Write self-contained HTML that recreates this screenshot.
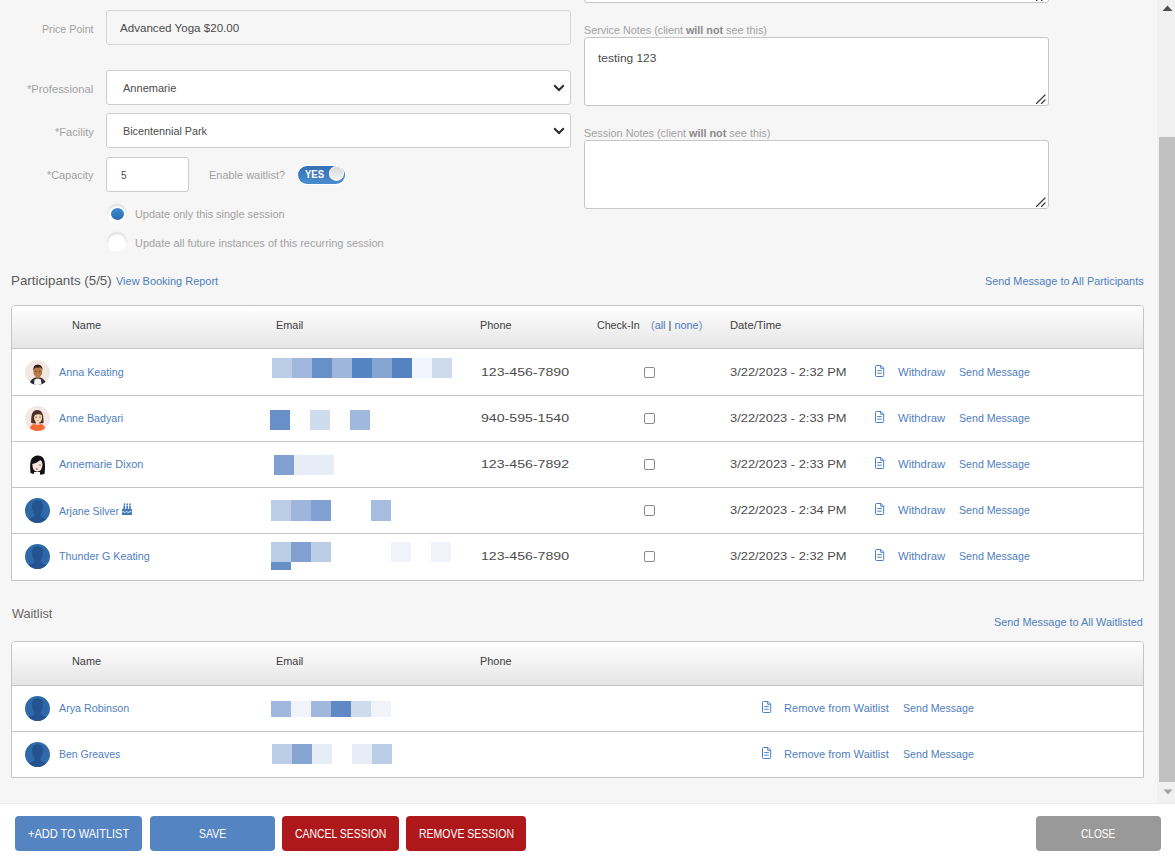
<!DOCTYPE html>
<html><head><meta charset="utf-8"><style>
html,body{margin:0;padding:0;}
body{width:1175px;height:861px;overflow:hidden;background:#f6f6f6;position:relative;font-family:"Liberation Sans",sans-serif;}
.a{position:absolute;box-sizing:border-box;}
.t{position:absolute;white-space:nowrap;line-height:1;transform-origin:0 0;font-family:"Liberation Sans",sans-serif;}
.inp{position:absolute;box-sizing:border-box;background:#fff;border:1px solid #cdcdcd;border-radius:3px;}
.ta{position:absolute;box-sizing:border-box;background:#fff;border:1px solid #c6c6c6;border-radius:3px;}
.grip{position:absolute;right:2px;bottom:1px;width:10px;height:10px;}
.tbl{position:absolute;box-sizing:border-box;background:#fff;border:1px solid #c4c4c4;border-radius:4px 4px 0 0;overflow:hidden;}
.th{position:absolute;left:0;right:0;top:0;background:linear-gradient(#ffffff,#e5e5e5);border-bottom:1px solid #c4c4c4;}
.rl{position:absolute;left:0;right:0;height:1px;background:#c4c4c4;}
.av{position:absolute;width:25px;height:25px;}
.em{position:absolute;}
.ic{position:absolute;width:10px;height:13px;}
.cb{position:absolute;width:11px;height:11px;box-sizing:border-box;border:1px solid #8a8a8a;border-radius:2px;background:#fff;}
.btn{position:absolute;top:816px;height:35px;border-radius:4px;}

</style></head><body>
<div class="ta" style="left:584px;top:-40px;width:465px;height:43px"><svg class="grip" viewBox="0 0 10 10"><path d="M0.5 9.5 L9 1 M5.5 9.5 L9 6" stroke="#3a3a3a" stroke-width="1.2" stroke-linecap="round" fill="none"/></svg></div>
<div class="inp" style="left:106px;top:10px;width:465px;height:35px;background:#f6f6f6;border-color:#d6d6d6"></div>
<div class="inp" style="left:106px;top:70px;width:465px;height:35px"><svg style="position:absolute;left:445.5px;top:12.7px" width="12" height="8" viewBox="0 0 12 8"><path d="M1.2 1.3 L6 6 L10.8 1.3" stroke="#2b2b2b" stroke-width="2" fill="none"/></svg></div>
<div class="inp" style="left:106px;top:113px;width:465px;height:35px"><svg style="position:absolute;left:445.5px;top:12.7px" width="12" height="8" viewBox="0 0 12 8"><path d="M1.2 1.3 L6 6 L10.8 1.3" stroke="#2b2b2b" stroke-width="2" fill="none"/></svg></div>
<div class="inp" style="left:106px;top:157px;width:83px;height:35px"></div>
<div class="a" style="left:298px;top:166px;width:47px;height:18px;border-radius:9px;background:linear-gradient(#3570b4,#4a8dce);box-shadow:0 0 0 1px #fff"></div>
<div class="a" style="left:328.8px;top:166.3px;width:15.5px;height:15px;border-radius:50%;background:linear-gradient(#d8d8d8,#f4f4f4);border:1px solid #fff"></div>
<div class="a" style="left:107px;top:203.5px;width:20px;height:20px;border-radius:50%;background:#fff;box-shadow:inset 0 2px 2.5px rgba(0,0,0,0.13), 0 -0.5px 1px rgba(0,0,0,0.05)"></div>
<div class="a" style="left:111px;top:208px;width:13px;height:12px;border-radius:50%;background:linear-gradient(#3b8bd2,#2c6cb2)"></div>
<div class="a" style="left:107px;top:232px;width:20px;height:20px;border-radius:50%;background:#fff;box-shadow:inset 0 2px 2.5px rgba(0,0,0,0.13), 0 -0.5px 1px rgba(0,0,0,0.05)"></div>
<div class="ta" style="left:584px;top:37px;width:465px;height:69px"><svg class="grip" viewBox="0 0 10 10"><path d="M0.5 9.5 L9 1 M5.5 9.5 L9 6" stroke="#3a3a3a" stroke-width="1.2" stroke-linecap="round" fill="none"/></svg></div>
<div class="ta" style="left:584px;top:140px;width:465px;height:69px"><svg class="grip" viewBox="0 0 10 10"><path d="M0.5 9.5 L9 1 M5.5 9.5 L9 6" stroke="#3a3a3a" stroke-width="1.2" stroke-linecap="round" fill="none"/></svg></div>
<div class="a" style="left:1157px;top:0;width:18px;height:803px;background:#f1f1f1"></div>
<div class="a" style="left:1159px;top:137px;width:16px;height:645px;background:#c1c1c1"></div>
<svg class="a" style="left:1162px;top:5px" width="11" height="7" viewBox="0 0 11 7"><path d="M0.5 6 L5.5 0.5 L10.5 6 Z" fill="#505050"/></svg>
<svg class="a" style="left:1162.5px;top:789px" width="10" height="6" viewBox="0 0 10 6"><path d="M0.5 0.5 L5 5.5 L9.5 0.5 Z" fill="#a3a3a3"/></svg>
<div class="a" style="left:0;top:803px;width:1175px;height:58px;background:#fff;border-top:1px solid #eaeaea"></div>
<div class="btn" style="left:15px;width:127px;background:#5584c2"></div>
<div class="btn" style="left:150px;width:125px;background:#5584c2"></div>
<div class="btn" style="left:282px;width:117px;background:#af181a"></div>
<div class="btn" style="left:406px;width:120px;background:#af181a"></div>
<div class="btn" style="left:1036px;width:125px;background:#999999"></div>
<div class="tbl" style="left:11px;top:305px;width:1133px;height:276px"><div class="th" style="height:42px"></div><div class="rl" style="top:89px"></div><div class="rl" style="top:135px"></div><div class="rl" style="top:181px"></div><div class="rl" style="top:227px"></div></div>
<div class="av" style="left:25px;top:360px"><svg viewBox="0 0 25 25" width="25" height="25"><defs><clipPath id="c1"><circle cx="12.5" cy="12.5" r="12.5"/></clipPath></defs>
<g clip-path="url(#c1)"><rect width="25" height="25" fill="#f2e7e4"/>
<path d="M4.5 25 L5.5 21 Q7 18.5 10 17.5 L15.5 17.5 Q18.5 18.5 20 21 L21 25 Z" fill="#2b2b31"/>
<path d="M9 25 L9.5 19.5 Q12.5 18 16 19.5 L16.5 25 Z" fill="#f4f5f7"/>
<rect x="11" y="15.5" width="3.6" height="3.5" fill="#a86a35"/>
<ellipse cx="12.8" cy="12" rx="4.4" ry="5.3" fill="#b97a41"/>
<path d="M8.2 11.5 Q7.5 4.5 12.8 4.5 Q18 4.5 17.5 11 Q17 8 15.5 7.8 Q12.5 7 10 8 Q8.7 9 8.2 11.5 Z" fill="#3a2116"/>
<ellipse cx="10.8" cy="11.3" rx="0.9" ry="0.6" fill="#4a4e5a"/><ellipse cx="14.8" cy="11.3" rx="0.9" ry="0.6" fill="#4a4e5a"/>
<ellipse cx="12.7" cy="14.9" rx="1.2" ry="0.7" fill="#e0687a"/>
</g></svg></div>
<div class="av" style="left:25px;top:406px"><svg viewBox="0 0 25 25" width="25" height="25"><defs><clipPath id="c2"><circle cx="12.5" cy="12.5" r="12.5"/></clipPath></defs>
<g clip-path="url(#c2)"><rect width="25" height="25" fill="#f2e8e6"/>
<path d="M6.2 17 Q5.5 4 12.3 4 Q19 4 18.5 17 Q12.3 18.5 6.2 17 Z" fill="#4e3028"/>
<path d="M4.5 25 Q4.5 19 9 18 Q12.3 19.5 16 18 Q20.5 19 20.5 25 Z" fill="#f56a32"/>
<rect x="10.8" y="15" width="3.4" height="3.6" fill="#f2d3a6"/>
<ellipse cx="13.1" cy="11.6" rx="4" ry="5.2" fill="#f6dab2"/>
<path d="M8.8 11 Q9 6 12.5 6 Q16 6 16.6 9 Q14 7.5 9.8 9 Z" fill="#4e3028"/>
<ellipse cx="11.2" cy="11.2" rx="0.9" ry="0.7" fill="#7a7c78"/><ellipse cx="15" cy="11.2" rx="0.9" ry="0.7" fill="#7a7c78"/>
<ellipse cx="13" cy="14.5" rx="1.1" ry="0.6" fill="#e49a9c"/>
</g></svg></div>
<div class="av" style="left:25px;top:452px"><svg viewBox="0 0 25 25" width="25" height="25"><defs><clipPath id="c3"><circle cx="12.5" cy="12.5" r="12.5"/></clipPath></defs>
<g clip-path="url(#c3)"><rect width="25" height="25" fill="#fcfcfc"/>
<path d="M5.5 21 Q4.5 12 6 8 Q8 3.5 13 3.5 Q18.5 3.7 19.5 9 Q20.5 14 19.5 22 Q12.5 24 5.5 21 Z" fill="#111"/>
<path d="M9 25 L9 20 Q12 19.3 15 20 L15 25 Z" fill="#fafafa"/>
<path d="M7.3 12 Q7.5 19.5 12.3 19.5 Q17.3 19.5 17.5 12 Q17 9 15.5 8 Q12 11 7.3 12 Z" fill="#f9e6da"/>
<path d="M13.8 13 H16 " stroke="#333" stroke-width="0.6"/>
<ellipse cx="11.9" cy="16.9" rx="1.1" ry="0.9" fill="#e06a78"/>
</g></svg></div>
<div class="av" style="left:25px;top:498px"><svg viewBox="0 0 25 25" width="25" height="25"><defs><clipPath id="cd1"><circle cx="12.5" cy="12.5" r="12.5"/></clipPath></defs>
<g clip-path="url(#cd1)"><rect width="25" height="25" fill="#2f6aa8"/>
<path d="M12.5 2.2 Q7 2.2 7 8.5 Q7 13.5 9.5 16.2 Q9.6 18.2 8.5 19.2 Q3.5 20.3 1 25 L24 25 Q21.5 20.3 16.5 19.2 Q15.4 18.2 15.5 16.2 Q18 13.5 18 8.5 Q18 2.2 12.5 2.2 Z" fill="#235391"/>
</g></svg></div>
<div class="av" style="left:25px;top:544px"><svg viewBox="0 0 25 25" width="25" height="25"><defs><clipPath id="cd2"><circle cx="12.5" cy="12.5" r="12.5"/></clipPath></defs>
<g clip-path="url(#cd2)"><rect width="25" height="25" fill="#2f6aa8"/>
<path d="M12.5 2.2 Q7 2.2 7 8.5 Q7 13.5 9.5 16.2 Q9.6 18.2 8.5 19.2 Q3.5 20.3 1 25 L24 25 Q21.5 20.3 16.5 19.2 Q15.4 18.2 15.5 16.2 Q18 13.5 18 8.5 Q18 2.2 12.5 2.2 Z" fill="#235391"/>
</g></svg></div>
<div class="ic" style="left:875px;top:364px"><svg viewBox="0 0 10 13" width="10" height="13"><path d="M0.5 1.5 Q0.5 0.5 1.5 0.5 H6 L8.7 3.2 V10.7 Q8.7 11.5 7.8 11.5 H1.5 Q0.5 11.5 0.5 10.7 Z" fill="none" stroke="#4a80c2" stroke-width="1"/><path d="M5.7 0.6 V3.3 H8.6" fill="none" stroke="#4a80c2" stroke-width="1"/><path d="M2.2 5.6 H6.8 M2.2 8.2 H6.8" stroke="#4a80c2" stroke-width="1"/></svg></div>
<div class="cb" style="left:644px;top:367px"></div>
<div class="ic" style="left:875px;top:410px"><svg viewBox="0 0 10 13" width="10" height="13"><path d="M0.5 1.5 Q0.5 0.5 1.5 0.5 H6 L8.7 3.2 V10.7 Q8.7 11.5 7.8 11.5 H1.5 Q0.5 11.5 0.5 10.7 Z" fill="none" stroke="#4a80c2" stroke-width="1"/><path d="M5.7 0.6 V3.3 H8.6" fill="none" stroke="#4a80c2" stroke-width="1"/><path d="M2.2 5.6 H6.8 M2.2 8.2 H6.8" stroke="#4a80c2" stroke-width="1"/></svg></div>
<div class="cb" style="left:644px;top:413px"></div>
<div class="ic" style="left:875px;top:456px"><svg viewBox="0 0 10 13" width="10" height="13"><path d="M0.5 1.5 Q0.5 0.5 1.5 0.5 H6 L8.7 3.2 V10.7 Q8.7 11.5 7.8 11.5 H1.5 Q0.5 11.5 0.5 10.7 Z" fill="none" stroke="#4a80c2" stroke-width="1"/><path d="M5.7 0.6 V3.3 H8.6" fill="none" stroke="#4a80c2" stroke-width="1"/><path d="M2.2 5.6 H6.8 M2.2 8.2 H6.8" stroke="#4a80c2" stroke-width="1"/></svg></div>
<div class="cb" style="left:644px;top:459px"></div>
<div class="ic" style="left:875px;top:502px"><svg viewBox="0 0 10 13" width="10" height="13"><path d="M0.5 1.5 Q0.5 0.5 1.5 0.5 H6 L8.7 3.2 V10.7 Q8.7 11.5 7.8 11.5 H1.5 Q0.5 11.5 0.5 10.7 Z" fill="none" stroke="#4a80c2" stroke-width="1"/><path d="M5.7 0.6 V3.3 H8.6" fill="none" stroke="#4a80c2" stroke-width="1"/><path d="M2.2 5.6 H6.8 M2.2 8.2 H6.8" stroke="#4a80c2" stroke-width="1"/></svg></div>
<div class="cb" style="left:644px;top:505px"></div>
<div class="ic" style="left:875px;top:548px"><svg viewBox="0 0 10 13" width="10" height="13"><path d="M0.5 1.5 Q0.5 0.5 1.5 0.5 H6 L8.7 3.2 V10.7 Q8.7 11.5 7.8 11.5 H1.5 Q0.5 11.5 0.5 10.7 Z" fill="none" stroke="#4a80c2" stroke-width="1"/><path d="M5.7 0.6 V3.3 H8.6" fill="none" stroke="#4a80c2" stroke-width="1"/><path d="M2.2 5.6 H6.8 M2.2 8.2 H6.8" stroke="#4a80c2" stroke-width="1"/></svg></div>
<div class="cb" style="left:644px;top:551px"></div>
<svg class="a" style="left:122px;top:503px" width="10" height="12" viewBox="0 0 10 12"><g fill="#3f78bc"><rect x="1.4" y="2.6" width="1.6" height="3.6"/><rect x="4.3" y="2.6" width="1.6" height="3.6"/><rect x="7.1" y="2.6" width="1.6" height="3.6"/><ellipse cx="2.4" cy="1.2" rx="0.8" ry="1"/><ellipse cx="5.2" cy="1.2" rx="0.8" ry="1"/><ellipse cx="8" cy="1.2" rx="0.8" ry="1"/><rect x="0" y="6" width="10" height="6" rx="0.5"/></g><path d="M0.3 9 Q1.2 8 2 9 Q2.9 10 3.7 9 Q4.6 8 5.4 9 Q6.3 10 7.1 9 Q8 8 9.7 9" stroke="#fff" stroke-width="0.9" fill="none"/></svg>
<div class="em" style="left:272px;top:358px;width:20px;height:20px;background:#bccde6"></div>
<div class="em" style="left:292px;top:358px;width:20px;height:20px;background:#a0b8de"></div>
<div class="em" style="left:312px;top:358px;width:20px;height:20px;background:#6890c8"></div>
<div class="em" style="left:332px;top:358px;width:20px;height:20px;background:#9eb5dc"></div>
<div class="em" style="left:352px;top:358px;width:20px;height:20px;background:#5584c2"></div>
<div class="em" style="left:372px;top:358px;width:20px;height:20px;background:#86a5d3"></div>
<div class="em" style="left:392px;top:358px;width:20px;height:20px;background:#5583c2"></div>
<div class="em" style="left:412px;top:358px;width:20px;height:20px;background:#f2f5fb"></div>
<div class="em" style="left:432px;top:358px;width:20px;height:20px;background:#cddbec"></div>
<div class="em" style="left:270px;top:410px;width:20px;height:20px;background:#6890c8"></div>
<div class="em" style="left:310px;top:410px;width:20px;height:20px;background:#cddbec"></div>
<div class="em" style="left:350px;top:410px;width:20px;height:20px;background:#a0b8de"></div>
<div class="em" style="left:274px;top:455px;width:20px;height:20px;background:#7fa0d0"></div>
<div class="em" style="left:294px;top:455px;width:20px;height:20px;background:#e6edf7"></div>
<div class="em" style="left:314px;top:455px;width:20px;height:20px;background:#e6edf7"></div>
<div class="em" style="left:271px;top:500px;width:20px;height:21px;background:#bccde6"></div>
<div class="em" style="left:291px;top:500px;width:20px;height:21px;background:#9eb5dc"></div>
<div class="em" style="left:311px;top:500px;width:20px;height:21px;background:#7fa0d0"></div>
<div class="em" style="left:371px;top:500px;width:20px;height:21px;background:#a7bde0"></div>
<div class="em" style="left:271px;top:542px;width:20px;height:20px;background:#bccde6"></div>
<div class="em" style="left:291px;top:542px;width:20px;height:20px;background:#7fa0d0"></div>
<div class="em" style="left:311px;top:542px;width:20px;height:20px;background:#bccde6"></div>
<div class="em" style="left:391px;top:542px;width:20px;height:20px;background:#f0f4fa"></div>
<div class="em" style="left:431px;top:542px;width:20px;height:20px;background:#f0f4fa"></div>
<div class="em" style="left:271px;top:562px;width:20px;height:8px;background:#6890c8"></div>
<div class="tbl" style="left:11px;top:641px;width:1133px;height:137px"><div class="th" style="height:43px"></div><div class="rl" style="top:89px"></div></div>
<div class="av" style="left:25px;top:696px"><svg viewBox="0 0 25 25" width="25" height="25"><defs><clipPath id="cd3"><circle cx="12.5" cy="12.5" r="12.5"/></clipPath></defs>
<g clip-path="url(#cd3)"><rect width="25" height="25" fill="#2f6aa8"/>
<path d="M12.5 2.2 Q7 2.2 7 8.5 Q7 13.5 9.5 16.2 Q9.6 18.2 8.5 19.2 Q3.5 20.3 1 25 L24 25 Q21.5 20.3 16.5 19.2 Q15.4 18.2 15.5 16.2 Q18 13.5 18 8.5 Q18 2.2 12.5 2.2 Z" fill="#235391"/>
</g></svg></div>
<div class="ic" style="left:762px;top:700px"><svg viewBox="0 0 10 13" width="10" height="13"><path d="M0.5 1.5 Q0.5 0.5 1.5 0.5 H6 L8.7 3.2 V10.7 Q8.7 11.5 7.8 11.5 H1.5 Q0.5 11.5 0.5 10.7 Z" fill="none" stroke="#4a80c2" stroke-width="1"/><path d="M5.7 0.6 V3.3 H8.6" fill="none" stroke="#4a80c2" stroke-width="1"/><path d="M2.2 5.6 H6.8 M2.2 8.2 H6.8" stroke="#4a80c2" stroke-width="1"/></svg></div>
<div class="av" style="left:25px;top:742px"><svg viewBox="0 0 25 25" width="25" height="25"><defs><clipPath id="cd4"><circle cx="12.5" cy="12.5" r="12.5"/></clipPath></defs>
<g clip-path="url(#cd4)"><rect width="25" height="25" fill="#2f6aa8"/>
<path d="M12.5 2.2 Q7 2.2 7 8.5 Q7 13.5 9.5 16.2 Q9.6 18.2 8.5 19.2 Q3.5 20.3 1 25 L24 25 Q21.5 20.3 16.5 19.2 Q15.4 18.2 15.5 16.2 Q18 13.5 18 8.5 Q18 2.2 12.5 2.2 Z" fill="#235391"/>
</g></svg></div>
<div class="ic" style="left:762px;top:746px"><svg viewBox="0 0 10 13" width="10" height="13"><path d="M0.5 1.5 Q0.5 0.5 1.5 0.5 H6 L8.7 3.2 V10.7 Q8.7 11.5 7.8 11.5 H1.5 Q0.5 11.5 0.5 10.7 Z" fill="none" stroke="#4a80c2" stroke-width="1"/><path d="M5.7 0.6 V3.3 H8.6" fill="none" stroke="#4a80c2" stroke-width="1"/><path d="M2.2 5.6 H6.8 M2.2 8.2 H6.8" stroke="#4a80c2" stroke-width="1"/></svg></div>
<div class="em" style="left:271px;top:701px;width:20px;height:16px;background:#a0b8de"></div>
<div class="em" style="left:291px;top:701px;width:20px;height:16px;background:#f0f4fa"></div>
<div class="em" style="left:311px;top:701px;width:20px;height:16px;background:#a0b8de"></div>
<div class="em" style="left:331px;top:701px;width:20px;height:16px;background:#5f88c5"></div>
<div class="em" style="left:351px;top:701px;width:20px;height:16px;background:#cddbec"></div>
<div class="em" style="left:371px;top:701px;width:20px;height:16px;background:#f0f4fa"></div>
<div class="em" style="left:272px;top:744px;width:20px;height:20px;background:#bccde6"></div>
<div class="em" style="left:292px;top:744px;width:20px;height:20px;background:#86a5d3"></div>
<div class="em" style="left:312px;top:744px;width:20px;height:20px;background:#e6edf7"></div>
<div class="em" style="left:352px;top:744px;width:20px;height:20px;background:#e6edf7"></div>
<div class="em" style="left:372px;top:744px;width:20px;height:20px;background:#bccde6"></div>
<span class=t style="left:42.1px;top:23.69px;font-size:11px;color:#a2a2a2;font-weight:normal;transform:scaleX(0.9699)">Price Point</span><span class=t style="left:27.4px;top:83.69px;font-size:11px;color:#a2a2a2;font-weight:normal;transform:scaleX(1.0212)">*Professional</span><span class=t style="left:54.9px;top:126.69px;font-size:11px;color:#a2a2a2;font-weight:normal;transform:scaleX(1.0074)">*Facility</span><span class=t style="left:47.2px;top:169.69px;font-size:11px;color:#a2a2a2;font-weight:normal;transform:scaleX(0.9877)">*Capacity</span><span class=t style="left:120.1px;top:22.69px;font-size:11px;color:#4c4c4c;font-weight:normal;transform:scaleX(1.0533)">Advanced Yoga $20.00</span><span class=t style="left:123.1px;top:82.69px;font-size:11px;color:#4c4c4c;font-weight:normal;transform:scaleX(1.0037)">Annemarie</span><span class=t style="left:123.3px;top:125.69px;font-size:11px;color:#4c4c4c;font-weight:normal;transform:scaleX(0.9812)">Bicentennial Park</span><span class=t style="left:121.3px;top:169.69px;font-size:11px;color:#4c4c4c;font-weight:normal;transform:scaleX(0.9143)">5</span><span class=t style="left:208.6px;top:169.69px;font-size:11px;color:#a2a2a2;font-weight:normal;transform:scaleX(0.9956)">Enable waitlist?</span><span class=t style="left:135.3px;top:208.69px;font-size:11px;color:#a2a2a2;font-weight:normal;transform:scaleX(0.9899)">Update only this single session</span><span class=t style="left:135.3px;top:237.69px;font-size:11px;color:#a2a2a2;font-weight:normal;transform:scaleX(0.9969)">Update all future instances of this recurring session</span><span class=t style="left:584.4px;top:25.03px;font-size:10.6px;color:#a2a2a2;font-weight:normal;transform:scaleX(1.0186)">Service Notes (client <b style="color:#8a8a8a">will not</b> see this)</span><span class=t style="left:598.0px;top:52.69px;font-size:11px;color:#4c4c4c;font-weight:normal;transform:scaleX(1.0849)">testing 123</span><span class=t style="left:584.4px;top:128.03px;font-size:10.6px;color:#a2a2a2;font-weight:normal;transform:scaleX(1.0246)">Session Notes (client <b style="color:#8a8a8a">will not</b> see this)</span><span class=t style="left:11.3px;top:274.00px;font-size:13px;color:#5a5a5a;font-weight:normal;transform:scaleX(1.0248)">Participants (5/5)</span><span class=t style="left:116.0px;top:275.69px;font-size:11px;color:#5080c0;font-weight:normal;transform:scaleX(0.9958)">View Booking Report</span><span class=t style="left:984.7px;top:275.69px;font-size:11px;color:#5080c0;font-weight:normal;transform:scaleX(0.9862)">Send Message to All Participants</span><span class=t style="left:72.1px;top:319.69px;font-size:11px;color:#404040;font-weight:normal;transform:scaleX(0.9883)">Name</span><span class=t style="left:276.1px;top:319.69px;font-size:11px;color:#404040;font-weight:normal;transform:scaleX(0.9922)">Email</span><span class=t style="left:480.0px;top:319.69px;font-size:11px;color:#404040;font-weight:normal;transform:scaleX(0.9902)">Phone</span><span class=t style="left:597.4px;top:319.69px;font-size:11px;color:#404040;font-weight:normal;transform:scaleX(0.9675)">Check-In</span><span class=t style="left:650.7px;top:319.69px;font-size:11px;color:#6f8bb5;font-weight:normal;transform:scaleX(0.9898)">(<span style="color:#4d79bb">all</span> <span style="color:#333">|</span> <span style="color:#4d79bb">none</span>)</span><span class=t style="left:729.9px;top:319.69px;font-size:11px;color:#404040;font-weight:normal;transform:scaleX(1.0193)">Date/Time</span><span class=t style="left:58.5px;top:366.69px;font-size:11px;color:#5080c0;font-weight:normal;transform:scaleX(0.9794)">Anna Keating</span><span class=t style="left:480.6px;top:366.69px;font-size:11px;color:#4c4c4c;font-weight:normal;transform:scaleX(1.2858)">123-456-7890</span><span class=t style="left:730.0px;top:366.69px;font-size:11px;color:#4c4c4c;font-weight:normal;transform:scaleX(1.1697)">3/22/2023 - 2:32 PM</span><span class=t style="left:897.6px;top:366.69px;font-size:11px;color:#5080c0;font-weight:normal;transform:scaleX(1.0274)">Withdraw</span><span class=t style="left:958.8px;top:366.69px;font-size:11px;color:#5080c0;font-weight:normal;transform:scaleX(0.9647)">Send Message</span><span class=t style="left:58.5px;top:412.69px;font-size:11px;color:#5080c0;font-weight:normal;transform:scaleX(0.9720)">Anne Badyari</span><span class=t style="left:480.6px;top:412.69px;font-size:11px;color:#4c4c4c;font-weight:normal;transform:scaleX(1.2858)">940-595-1540</span><span class=t style="left:730.0px;top:412.69px;font-size:11px;color:#4c4c4c;font-weight:normal;transform:scaleX(1.1697)">3/22/2023 - 2:33 PM</span><span class=t style="left:897.6px;top:412.69px;font-size:11px;color:#5080c0;font-weight:normal;transform:scaleX(1.0274)">Withdraw</span><span class=t style="left:958.8px;top:412.69px;font-size:11px;color:#5080c0;font-weight:normal;transform:scaleX(0.9647)">Send Message</span><span class=t style="left:58.5px;top:458.69px;font-size:11px;color:#5080c0;font-weight:normal;transform:scaleX(1.0003)">Annemarie Dixon</span><span class=t style="left:480.6px;top:458.69px;font-size:11px;color:#4c4c4c;font-weight:normal;transform:scaleX(1.2858)">123-456-7892</span><span class=t style="left:730.0px;top:458.69px;font-size:11px;color:#4c4c4c;font-weight:normal;transform:scaleX(1.1697)">3/22/2023 - 2:33 PM</span><span class=t style="left:897.6px;top:458.69px;font-size:11px;color:#5080c0;font-weight:normal;transform:scaleX(1.0274)">Withdraw</span><span class=t style="left:958.8px;top:458.69px;font-size:11px;color:#5080c0;font-weight:normal;transform:scaleX(0.9647)">Send Message</span><span class=t style="left:58.5px;top:505.69px;font-size:11px;color:#5080c0;font-weight:normal;transform:scaleX(0.9622)">Arjane Silver</span><span class=t style="left:730.0px;top:504.69px;font-size:11px;color:#4c4c4c;font-weight:normal;transform:scaleX(1.1697)">3/22/2023 - 2:34 PM</span><span class=t style="left:897.6px;top:504.69px;font-size:11px;color:#5080c0;font-weight:normal;transform:scaleX(1.0274)">Withdraw</span><span class=t style="left:958.8px;top:504.69px;font-size:11px;color:#5080c0;font-weight:normal;transform:scaleX(0.9647)">Send Message</span><span class=t style="left:58.5px;top:550.69px;font-size:11px;color:#5080c0;font-weight:normal;transform:scaleX(0.9758)">Thunder G Keating</span><span class=t style="left:480.6px;top:550.69px;font-size:11px;color:#4c4c4c;font-weight:normal;transform:scaleX(1.2858)">123-456-7890</span><span class=t style="left:730.0px;top:550.69px;font-size:11px;color:#4c4c4c;font-weight:normal;transform:scaleX(1.1697)">3/22/2023 - 2:32 PM</span><span class=t style="left:897.6px;top:550.69px;font-size:11px;color:#5080c0;font-weight:normal;transform:scaleX(1.0274)">Withdraw</span><span class=t style="left:958.8px;top:550.69px;font-size:11px;color:#5080c0;font-weight:normal;transform:scaleX(0.9647)">Send Message</span><span class=t style="left:11.6px;top:607.00px;font-size:13px;color:#666;font-weight:normal;transform:scaleX(0.9733)">Waitlist</span><span class=t style="left:994.4px;top:616.69px;font-size:11px;color:#5080c0;font-weight:normal;transform:scaleX(0.9879)">Send Message to All Waitlisted</span><span class=t style="left:72.1px;top:655.69px;font-size:11px;color:#404040;font-weight:normal;transform:scaleX(0.9883)">Name</span><span class=t style="left:276.1px;top:655.69px;font-size:11px;color:#404040;font-weight:normal;transform:scaleX(0.9922)">Email</span><span class=t style="left:480.0px;top:655.69px;font-size:11px;color:#404040;font-weight:normal;transform:scaleX(0.9902)">Phone</span><span class=t style="left:58.5px;top:702.69px;font-size:11px;color:#5080c0;font-weight:normal;transform:scaleX(0.9743)">Arya Robinson</span><span class=t style="left:784.0px;top:702.69px;font-size:11px;color:#5080c0;font-weight:normal;transform:scaleX(1.0076)">Remove from Waitlist</span><span class=t style="left:903.2px;top:702.69px;font-size:11px;color:#5080c0;font-weight:normal;transform:scaleX(0.9647)">Send Message</span><span class=t style="left:58.5px;top:748.69px;font-size:11px;color:#5080c0;font-weight:normal;transform:scaleX(0.9548)">Ben Greaves</span><span class=t style="left:784.0px;top:748.69px;font-size:11px;color:#5080c0;font-weight:normal;transform:scaleX(1.0076)">Remove from Waitlist</span><span class=t style="left:903.2px;top:748.69px;font-size:11px;color:#5080c0;font-weight:normal;transform:scaleX(0.9647)">Send Message</span><span class=t style="left:28.4px;top:827.00px;font-size:13px;color:#fff;font-weight:normal;transform:scaleX(0.8482)">+ADD TO WAITLIST</span><span class=t style="left:198.8px;top:827.00px;font-size:13px;color:#fff;font-weight:normal;transform:scaleX(0.8037)">SAVE</span><span class=t style="left:294.8px;top:827.00px;font-size:13px;color:#fff;font-weight:normal;transform:scaleX(0.8032)">CANCEL SESSION</span><span class=t style="left:418.7px;top:827.00px;font-size:13px;color:#fff;font-weight:normal;transform:scaleX(0.8068)">REMOVE SESSION</span><span class=t style="left:1081.3px;top:827.00px;font-size:13px;color:#fff;font-weight:normal;transform:scaleX(0.7782)">CLOSE</span><span class=t style="left:305.4px;top:169.11px;font-size:10.5px;color:#fff;font-weight:bold;transform:scaleX(0.9088)">YES</span>
</body></html>
